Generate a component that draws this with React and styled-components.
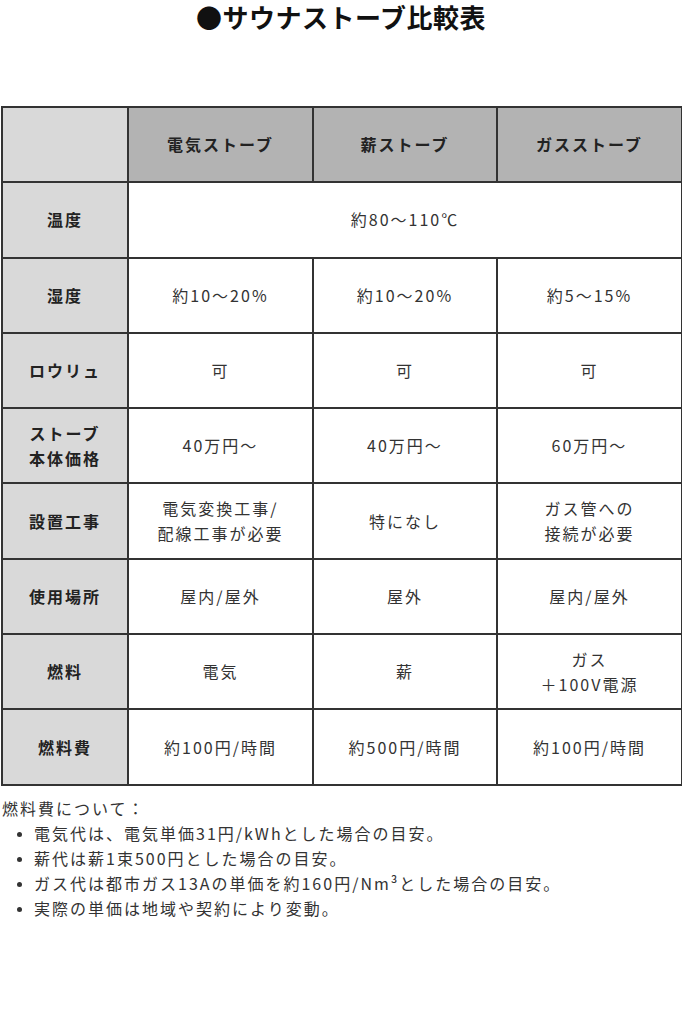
import styled, { createGlobalStyle } from "styled-components";

const GlobalStyle = createGlobalStyle`
  body {
    margin: 0;
    background: #fff;
    font-family: "Noto Sans CJK JP", "Noto Sans", sans-serif;
    color: #222;
  }
`;

const rows = [
  { label: "温度", span: "約80～110℃" },
  { label: "湿度", cells: ["約10～20%", "約10～20%", "約5～15%"] },
  { label: "ロウリュ", cells: ["可", "可", "可"] },
  { label: ["ストーブ", "本体価格"], cells: ["40万円～", "40万円～", "60万円～"] },
  { label: "設置工事", cells: [["電気変換工事/", "配線工事が必要"], "特になし", ["ガス管への", "接続が必要"]] },
  { label: "使用場所", cells: ["屋内/屋外", "屋外", "屋内/屋外"] },
  { label: "燃料", cells: ["電気", "薪", ["ガス", "＋100V電源"]] },
  { label: "燃料費", cells: ["約100円/時間", "約500円/時間", "約100円/時間"] },
];

const notes = [
  "電気代は、電気単価31円/kWhとした場合の目安。",
  "薪代は薪1束500円とした場合の目安。",
  "ガス代は都市ガス13Aの単価を約160円/Nm³とした場合の目安。",
  "実際の単価は地域や契約により変動。",
];

const Lines = ({ text }) =>
  Array.isArray(text) ? text.map((t, i) => <div key={i}>{t}</div>) : text;

export default function App() {
  return (
    <Page>
      <GlobalStyle />
      <Title>●サウナストーブ比較表</Title>
      <Table>
        <colgroup>
          <col style={{ width: 126 }} />
          <col style={{ width: 185 }} />
          <col style={{ width: 184 }} />
          <col style={{ width: 185 }} />
        </colgroup>
        <thead>
          <tr>
            <Corner />
            <Head>電気ストーブ</Head>
            <Head>薪ストーブ</Head>
            <Head>ガスストーブ</Head>
          </tr>
        </thead>
        <tbody>
          {rows.map((r, i) => (
            <tr key={i}>
              <Label>
                <Lines text={r.label} />
              </Label>
              {r.span ? (
                <Cell colSpan={3}>{r.span}</Cell>
              ) : (
                r.cells.map((c, j) => (
                  <Cell key={j}>
                    <Lines text={c} />
                  </Cell>
                ))
              )}
            </tr>
          ))}
        </tbody>
      </Table>
      <Notes>
        <NoteTitle>燃料費について：</NoteTitle>
        <NoteList>
          {notes.map((n, i) => (
            <li key={i}>{n}</li>
          ))}
        </NoteList>
      </Notes>
    </Page>
  );
}

const Page = styled.div`
  width: 682px;
`;

const Title = styled.h1`
  margin: 0;
  height: 34px;
  line-height: 34px;
  text-align: center;
  font-size: 26px;
  font-weight: 700;
  color: #111;
  letter-spacing: 0.5px;
`;

const Table = styled.table`
  margin: 72px 0 0 1px;
  width: 680px;
  table-layout: fixed;
  border-collapse: collapse;
  border: 2px solid #333;

  td,
  th {
    border: 2px solid #333;
    height: 73.3px;
    padding: 0;
    text-align: center;
    vertical-align: middle;
    font-size: 16px;
    line-height: 25px;
    letter-spacing: 2px;
  }
`;

const Corner = styled.th`
  background: #d9d9d9;
`;

const Head = styled.th`
  background: #b3b3b3;
  font-weight: 700;
  color: #222;
`;

const Label = styled.td`
  background: #d9d9d9;
  font-weight: 700;
  color: #222;
`;

const Cell = styled.td`
  background: #fff;
  font-weight: 400;
  color: #333;
`;

const Notes = styled.div`
  padding: 10px 0 0 2px;
  font-size: 16px;
  line-height: 25px;
  letter-spacing: 2px;
  color: #333;
`;

const NoteTitle = styled.div``;

const NoteList = styled.ul`
  margin: 0;
  padding-left: 32px;
  li::marker {
    font-size: 13px;
  }
`;
